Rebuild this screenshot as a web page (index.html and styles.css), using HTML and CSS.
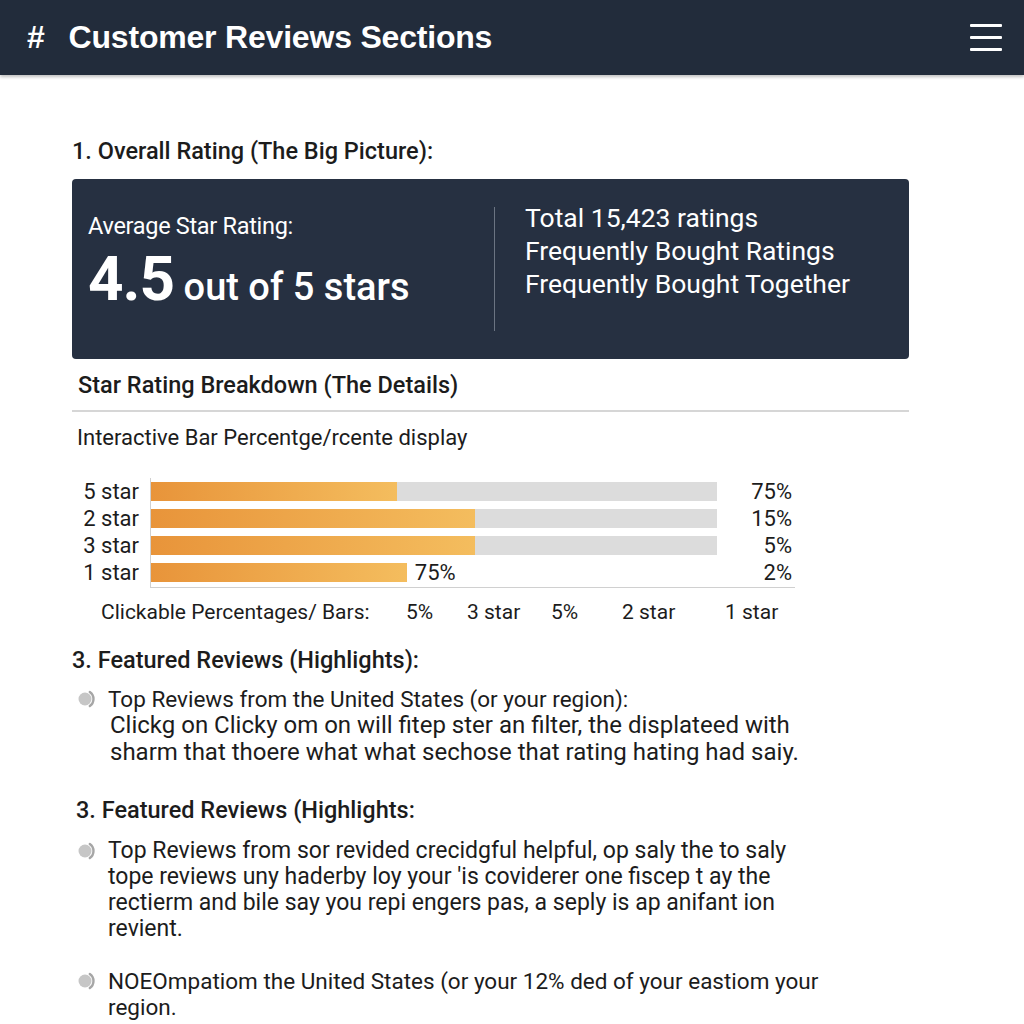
FILE: index.html
```html
<!DOCTYPE html>
<html lang="en">
<head>
    <meta charset="UTF-8">
    <meta name="viewport" content="width=device-width, initial-scale=1.0">
    <title>Customer Reviews Sections</title>
    <link rel="stylesheet" href="styles.css">
</head>
<body>
    <header class="topbar">
        <h1><span class="hash">#</span>Customer Reviews Sections</h1>
        <button class="menu" aria-label="Menu">
            <span></span><span></span><span></span>
        </button>
    </header>

    <main class="page">
        <h2 class="section-title">1. Overall Rating (The Big Picture):</h2>

        <div class="summary">
            <div class="summary-left">
                <p class="avg-label">Average Star Rating:</p>
                <p class="avg-value"><span class="big">4.5</span> out of 5 stars</p>
            </div>
            <div class="summary-right">
                <p>Total 15,423 ratings</p>
                <p>Frequently Bought Ratings</p>
                <p>Frequently Bought Together</p>
            </div>
        </div>

        <h3 class="sub-title">Star Rating Breakdown (The Details)</h3>
        <p class="caption">Interactive Bar Percentge/rcente display</p>

        <div class="chart">
            <div class="bar-row">
                <span class="bar-label">5 star</span>
                <div class="track"><div class="fill" style="width: 43.5%"></div></div>
                <span class="bar-pct">75%</span>
            </div>
            <div class="bar-row">
                <span class="bar-label">2 star</span>
                <div class="track"><div class="fill" style="width: 57.3%"></div></div>
                <span class="bar-pct">15%</span>
            </div>
            <div class="bar-row">
                <span class="bar-label">3 star</span>
                <div class="track"><div class="fill" style="width: 57.3%"></div></div>
                <span class="bar-pct">5%</span>
            </div>
            <div class="bar-row">
                <span class="bar-label">1 star</span>
                <div class="track bare"><div class="fill" style="width: 45.2%"></div><span class="inline-pct">75%</span></div>
                <span class="bar-pct">2%</span>
            </div>
        </div>

        <div class="clickable">
            <span class="click-label">Clickable Percentages/ Bars:</span>
            <span class="c1">5%</span>
            <span class="c2">3 star</span>
            <span class="c3">5%</span>
            <span class="c4">2 star</span>
            <span class="c5">1 star</span>
        </div>

        <h2 class="section-title featured">3. Featured Reviews (Highlights):</h2>
        <ul class="reviews">
            <li>
                <svg class="dot" viewBox="0 0 20 20" width="20" height="20"><circle cx="8" cy="10" r="6.5" fill="#c6c6c6"/><path d="M12.8 3 A8.5 8.5 0 0 1 12.8 17" fill="none" stroke="#a6a6a6" stroke-width="2.4" stroke-linecap="round"/></svg>
                <div class="review">
                    <p>Top Reviews from the United States (or your region):</p>
                    <p class="indent">Clickg on Clicky om on will fitep ster an filter, the displateed with<br>sharm that thoere what what sechose that rating hating had saiy.</p>
                </div>
            </li>
        </ul>

        <h2 class="section-title featured second">3. Featured Reviews (Highlights:</h2>
        <ul class="reviews">
            <li>
                <svg class="dot" viewBox="0 0 20 20" width="20" height="20"><circle cx="8" cy="10" r="6.5" fill="#c6c6c6"/><path d="M12.8 3 A8.5 8.5 0 0 1 12.8 17" fill="none" stroke="#a6a6a6" stroke-width="2.4" stroke-linecap="round"/></svg>
                <p class="wide">Top Reviews from sor revided crecidgful helpful, op saly the to saly<br>tope reviews uny haderby loy your 'is coviderer one fiscep t ay the<br>rectierm and bile say you repi engers pas, a seply is ap anifant ion<br>revient.</p>
            </li>
            <li class="gap">
                <svg class="dot" viewBox="0 0 20 20" width="20" height="20"><circle cx="8" cy="10" r="6.5" fill="#c6c6c6"/><path d="M12.8 3 A8.5 8.5 0 0 1 12.8 17" fill="none" stroke="#a6a6a6" stroke-width="2.4" stroke-linecap="round"/></svg>
                <p>NOEOmpatiom the United States (or your 12% ded of your eastiom your<br>region.</p>
            </li>
        </ul>
    </main>
</body>
</html>
```

FILE: styles.css
```css
body {
    font-family: Roboto, "Liberation Sans", Arial, sans-serif;
    margin: 0;
    padding: 0;
    background-color: #ffffff;
    color: #1c1c1c;
}
p {
    margin: 0;
}

/* top bar */
.topbar {
    background-color: #222c3b;
    height: 75px;
    display: flex;
    align-items: center;
    justify-content: space-between;
    padding: 0 22px 0 27px;
    box-shadow: 0 2px 3px rgba(0, 0, 0, 0.25);
}
.topbar h1 {
    margin: 0;
    color: #ffffff;
    font-family: "Liberation Sans", Arial, sans-serif;
    font-size: 32px;
    font-weight: bold;
    letter-spacing: -0.2px;
}
.hash {
    margin-right: 24px;
}
.menu {
    background: none;
    border: none;
    padding: 0;
    width: 32px;
    display: flex;
    flex-direction: column;
    gap: 9px;
    cursor: pointer;
}
.menu span {
    display: block;
    height: 3px;
    background-color: #ffffff;
    border-radius: 1px;
}

.page {
    padding: 62px 115px 0 72px;
}

.section-title {
    margin: 0 0 14px;
    font-size: 23.5px;
    font-weight: 500;
}

/* dark summary card */
.summary {
    background-color: #263041;
    border-radius: 4px;
    height: 180px;
    display: flex;
    color: #ffffff;
}
.summary-left {
    width: 423px;
    padding: 5px 0 0 16px;
    border-right: 1px solid #6b7482;
    margin: 28px 0;
    box-sizing: border-box;
}
.avg-label {
    font-size: 23.5px;
    letter-spacing: -0.3px;
}
.avg-value {
    font-size: 38px;
    font-weight: 500;
    margin-top: 2px;
}
.big {
    font-size: 62px;
    font-weight: bold;
    letter-spacing: -1px;
}
.summary-right {
    padding: 22px 0 0 30px;
    font-size: 26.5px;
    line-height: 33px;
}

.sub-title {
    margin: 12px 0 0;
    padding: 0 0 11px 6px;
    font-size: 23.5px;
    font-weight: 500;
    border-bottom: 2px solid #d6d6d6;
}
.caption {
    margin: 13px 0 0 5px;
    font-size: 22px;
}

/* star breakdown bars */
.chart {
    width: 645px;
    margin-top: 28px;
    margin-left: 78px;
    border-left: 1px solid #d0d0d0;
    border-bottom: 1px solid #d0d0d0;
    padding: 0 3px 1px 0;
    box-sizing: border-box;
}
.bar-row {
    position: relative;
    display: flex;
    align-items: center;
    height: 27px;
}
.bar-label {
    position: absolute;
    right: calc(100% + 12px);
    width: 80px;
    text-align: right;
    font-size: 22px;
}
.track {
    width: 566px;
    height: 19px;
    background-color: #dcdcdc;
    display: flex;
    align-items: center;
}
.track.bare {
    background-color: transparent;
}
.fill {
    height: 100%;
    background: linear-gradient(to right, #e8943a, #f4bd5e);
}
.inline-pct {
    margin-left: 8px;
    font-size: 22px;
}
.bar-pct {
    margin-left: auto;
    text-align: right;
    font-size: 22px;
}

.clickable {
    position: relative;
    height: 28px;
    margin: 12px 0 0 29px;
    font-size: 21px;
}
.clickable span {
    position: absolute;
    top: 0;
}
.click-label { left: 0; }
.c1 { left: 305px; }
.c2 { left: 366px; }
.c3 { left: 450px; }
.c4 { left: 521px; }
.c5 { left: 624px; }

.featured {
    margin-top: 18px;
    margin-bottom: 12px;
}
.featured.second {
    margin-left: 4px;
    margin-top: 30px;
    margin-bottom: 14px;
}

/* review bullets */
.reviews {
    list-style: none;
    margin: 0;
    padding: 0 0 0 5px;
}
.reviews li {
    display: flex;
    align-items: flex-start;
    gap: 11px;
}
.reviews li.gap {
    margin-top: 26px;
}
.dot {
    flex: none;
    margin-top: 3px;
}
.reviews p {
    font-size: 22.5px;
    line-height: 26px;
}
.reviews p.wide {
    font-size: 23px;
}
.reviews p.indent {
    padding-left: 2px;
    font-size: 24px;
    line-height: 27px;
}
```
